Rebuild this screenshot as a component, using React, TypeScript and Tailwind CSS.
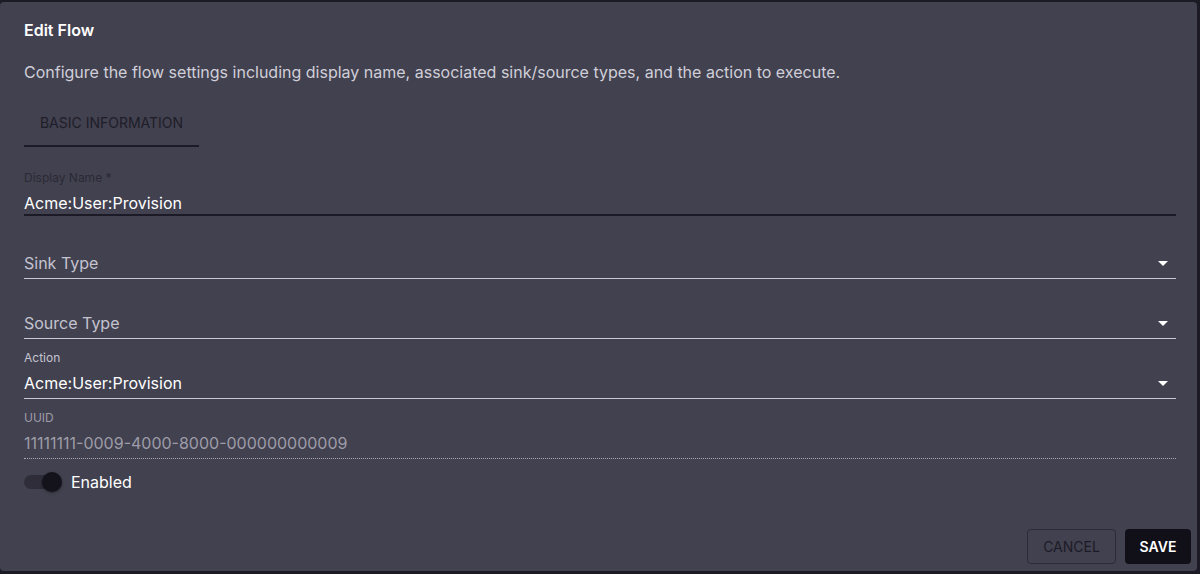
import { useState } from 'react'

function Caret() {
  return (
    <svg width="10" height="5" viewBox="0 0 10 5" className="shrink-0 fill-white">
      <path d="M0 0h10L5 5z" />
    </svg>
  )
}

function SelectField({ label, value, placeholder }: { label?: string; value?: string; placeholder?: string }) {
  return (
    <div className="flex flex-col pt-[9px]">
      <div className="h-[20px] text-[12px] leading-[20px] text-[#c4c3cf]">{label}</div>
      <div className="flex h-[31px] items-center justify-between border-b border-[#c9c8d3] pr-[8px]">
        {value ? (
          <span className="text-[16px] text-white">{value}</span>
        ) : (
          <span className="text-[16px] text-[#c4c3cf]">{placeholder}</span>
        )}
        <Caret />
      </div>
    </div>
  )
}

export default function App() {
  const [enabled, setEnabled] = useState(true)

  return (
    <div className="h-[574px] w-[1200px] overflow-hidden bg-[#1c1b25] pt-[2px] pr-[3px]" style={{ fontFamily: 'Inter, "Open Sans", sans-serif' }}>
      <div className="flex h-[569px] flex-col rounded-[4px] bg-[#42414f] pl-[24px] pr-[21px]">
        <h2 className="pt-[16px] text-[16px] font-semibold leading-[24px] text-white">Edit Flow</h2>
        <p className="mt-[18px] text-[16px] leading-[24px] text-[#d0cfd9]">
          Configure the flow settings including display name, associated sink/source types, and the action to execute.
        </p>

        <div className="mt-[15px] flex">
          <div className="flex h-[48px] w-[175px] items-center justify-center border-b-2 border-[#1b1a26] text-[14px] uppercase text-[#1e1d29]">
            Basic Information
          </div>
        </div>

        <div className="mt-[23px] flex flex-col">
          <div className="h-[16px] text-[12px] leading-[16px] text-[#2a2935]">Display Name *</div>
          <div className="flex h-[30px] items-center border-b-2 border-[#1b1a26] pt-[5px]">
            <span className="text-[16px] text-white">Acme:User:Provision</span>
          </div>
        </div>

        <div className="mt-[3px] flex flex-col">
          <SelectField placeholder="Sink Type" />
          <SelectField placeholder="Source Type" />
          <SelectField label="Action" value="Acme:User:Provision" />
          <div className="flex flex-col pt-[9px]">
            <div className="h-[20px] text-[12px] leading-[20px] text-[#9d9ca8]">UUID</div>
            <div className="flex h-[31px] items-center border-b border-dotted border-[#a9a8b4]">
              <span className="text-[16px] text-[#9d9ca8]">11111111-0009-4000-8000-000000000009</span>
            </div>
          </div>
        </div>

        <label className="mt-[11px] flex cursor-pointer items-center gap-[9px]" onClick={() => setEnabled(!enabled)}>
          <span className="relative flex h-[20px] w-[38px] items-center">
            <span className="h-[14px] w-[34px] rounded-full bg-[#2e2d39]" />
            <span
              className={
                'absolute top-0 h-[20px] w-[20px] rounded-full bg-[#14131c] shadow-[0_1px_3px_rgba(0,0,0,0.4)] ' +
                (enabled ? 'left-[18px]' : 'left-0')
              }
            />
          </span>
          <span className="text-[16px] text-white">Enabled</span>
        </label>

        <div className="mt-auto mb-[7px] -mr-[15px] flex justify-end gap-[9px]">
          <button className="h-[35px] w-[89px] rounded-[4px] border border-[#2c2b38] text-[14px] uppercase text-[#1c1b27]">
            Cancel
          </button>
          <button className="h-[35px] w-[66px] rounded-[4px] bg-[#111018] text-[14px] font-semibold uppercase text-white">
            Save
          </button>
        </div>
      </div>
    </div>
  )
}
